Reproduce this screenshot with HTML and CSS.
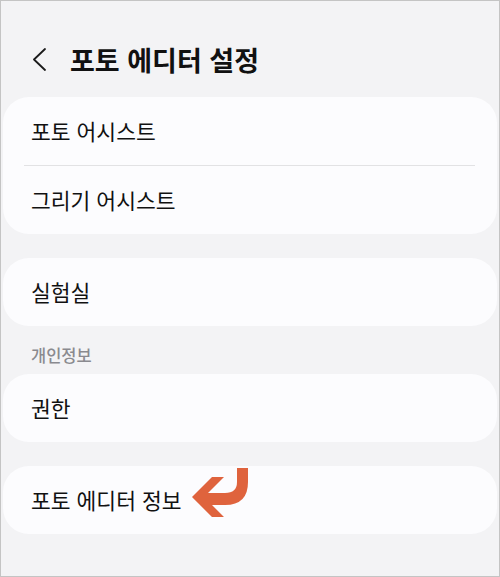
FILE: index.html
```html
<!DOCTYPE html>
<html lang="ko">
<head>
<meta charset="utf-8">
<title>포토 에디터 설정</title>
<link rel="stylesheet" href="styles.css">
</head>
<body>
<div class="screen">
  <header class="topbar">
    <svg class="back" width="16" height="24" viewBox="0 0 16 24" aria-hidden="true">
      <polyline points="13,2 2,12.5 13,23" fill="none" stroke="#1a1a1a" stroke-width="1.8" stroke-linecap="round" stroke-linejoin="round"/>
    </svg>
    <h1 class="title">포토 에디터 설정</h1>
  </header>

  <div class="card">
    <div class="row">포토 어시스트</div>
    <div class="divider"></div>
    <div class="row">그리기 어시스트</div>
  </div>

  <div class="card">
    <div class="row">실험실</div>
  </div>

  <div class="section-label">개인정보</div>

  <div class="card">
    <div class="row">권한</div>
  </div>

  <div class="card annotated">
    <div class="row">포토 에디터 정보</div>
    <svg class="pointer" width="62" height="54" viewBox="185 466 62 54" aria-hidden="true">
      <path d="M234 468 H245 V482 Q245 505 222 505 H209 L221 517 H209 L189 497 L209 477 H221 L205 493 H222 Q234 493 234 482 Z" fill="#df633d"/>
    </svg>
  </div>
</div>
</body>
</html>
```

FILE: styles.css
```css
* { box-sizing: border-box; }

html, body {
  margin: 0;
  padding: 0;
  background: #ffffff;
}

.screen {
  width: 500px;
  height: 577px;
  overflow: hidden;
  border: 1px solid #c4c4c4;
  background: #f3f3f5;
  padding: 0 2px;
  font-family: "Noto Sans CJK KR", "Noto Sans", sans-serif;
  color: #111111;
}

.topbar {
  height: 96px;
  padding-top: 20px;
  display: flex;
  align-items: center;
}

.back {
  margin-left: 29px;
  flex: none;
}

.title {
  margin: 0 0 0 22px;
  font-size: 27px;
  font-weight: 700;
  letter-spacing: 0;
  line-height: 1;
}

.card {
  background: #fcfcfe;
  border-radius: 26px;
  margin-bottom: 24px;
}

.annotated {
  position: relative;
}

.row {
  height: 68px;
  display: flex;
  align-items: center;
  padding-left: 28px;
  font-size: 21.5px;
  line-height: 1;
}

.divider {
  height: 1px;
  margin: 0 22px 0 21px;
  background: #e2e2e4;
}

.section-label {
  margin-top: -14px;
  padding: 9px 28px 9px;
  font-size: 16.5px;
  font-weight: 500;
  line-height: 20px;
  color: #8a8a8f;
}

.pointer {
  position: absolute;
  left: 185px;
  top: 0;
}
```
